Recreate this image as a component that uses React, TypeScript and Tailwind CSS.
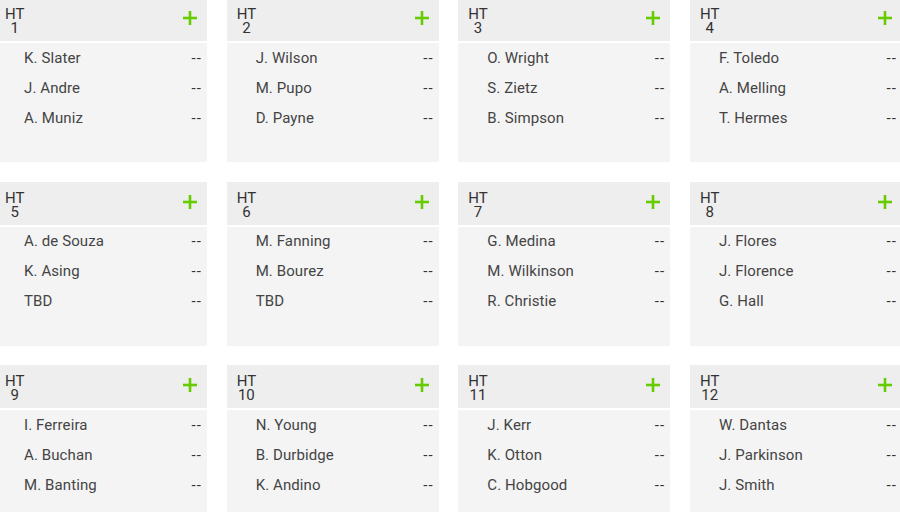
import React from "react";

const cards: string[][] = [
  ["K. Slater", "J. Andre", "A. Muniz"],
  ["J. Wilson", "M. Pupo", "D. Payne"],
  ["O. Wright", "S. Zietz", "B. Simpson"],
  ["F. Toledo", "A. Melling", "T. Hermes"],
  ["A. de Souza", "K. Asing", "TBD"],
  ["M. Fanning", "M. Bourez", "TBD"],
  ["G. Medina", "M. Wilkinson", "R. Christie"],
  ["J. Flores", "J. Florence", "G. Hall"],
  ["I. Ferreira", "A. Buchan", "M. Banting"],
  ["N. Young", "B. Durbidge", "K. Andino"],
  ["J. Kerr", "K. Otton", "C. Hobgood"],
  ["W. Dantas", "J. Parkinson", "J. Smith"],
];

function Plus() {
  return (
    <svg width="14" height="14" viewBox="0 0 14 14">
      <line x1="7" y1="0" x2="7" y2="14" stroke="#66cc00" strokeWidth="2.6" />
      <line x1="0" y1="7" x2="14" y2="7" stroke="#66cc00" strokeWidth="2.6" />
    </svg>
  );
}

function Card({ n, names }: { n: number; names: string[] }) {
  return (
    <div className="flex h-[164px] w-[212px] flex-col bg-white">
      <div className="flex h-[43px] items-start justify-between bg-[#eeeeee] pl-[10px] pr-[10px]">
        <div className="flex flex-col items-center pt-[9px] text-[15px] leading-[14px] text-[#333333]">
          <span>HT</span>
          <span>{n}</span>
        </div>
        <div className="pt-[13px]">
          <Plus />
        </div>
      </div>
      <div className="mt-[2px] flex-1 bg-[#f4f4f4]">
        {names.map((name) => (
          <div
            key={name}
            className="flex h-[30px] items-center justify-between pl-[29px] pr-[6px] text-[15px] tracking-[0.1px] text-[#444444]"
          >
            <span>{name}</span>
            <span className="flex gap-[1px] text-[#333333]">
              <span>-</span>
              <span>-</span>
            </span>
          </div>
        ))}
      </div>
    </div>
  );
}

export default function App() {
  return (
    <div
      className="h-[512px] w-[900px] overflow-hidden bg-white"
      style={{ fontFamily: "Roboto, 'Liberation Sans', sans-serif" }}
    >
      <div className="-ml-[5px] -mt-[2px] grid grid-cols-[repeat(4,212px)] gap-x-[19.67px] gap-y-[19.5px]">
        {cards.map((names, i) => (
          <Card key={i} n={i + 1} names={names} />
        ))}
      </div>
    </div>
  );
}
